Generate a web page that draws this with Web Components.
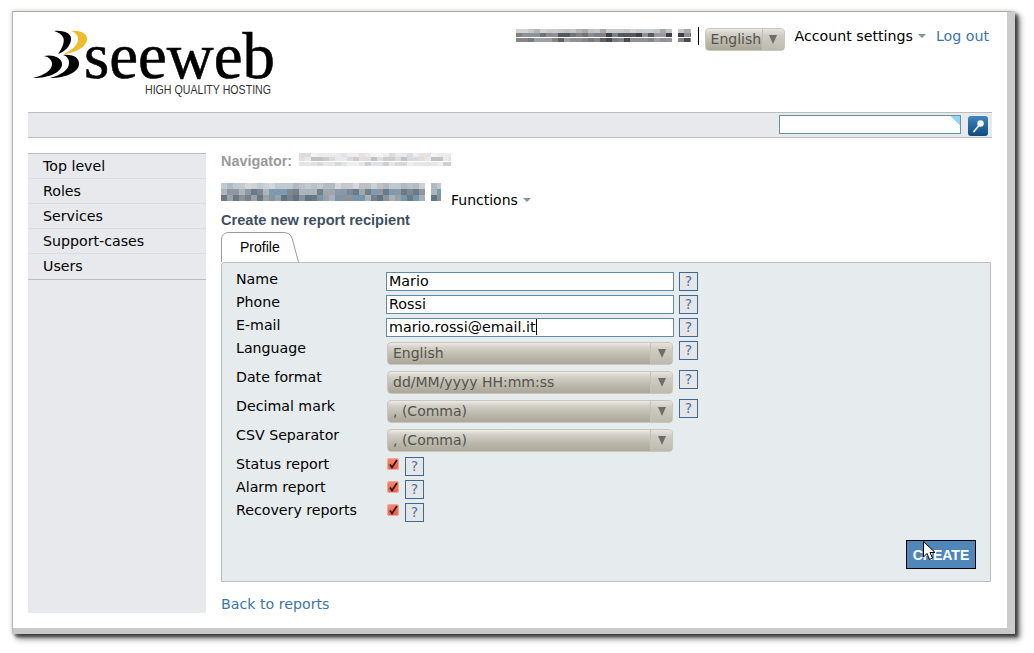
<!DOCTYPE html>
<html>
<head>
<meta charset="utf-8">
<title>Create new report recipient</title>
<style>
  html, body { margin: 0; height: 100%; overflow: hidden; background: #fff; }
  body { font: 14.2px/16px "DejaVu Sans", sans-serif; color: #000; }
</style>
</head>
<body>
<x-window>
  <x-header></x-header>
  <x-searchbar></x-searchbar>
  <x-columns>
    <x-sidebar slot="side">
      <x-navitem>Top level</x-navitem>
      <x-navitem>Roles</x-navitem>
      <x-navitem>Services</x-navitem>
      <x-navitem>Support-cases</x-navitem>
      <x-navitem>Users</x-navitem>
    </x-sidebar>
    <x-report-form></x-report-form>
  </x-columns>
</x-window>

<script>
const SANS = '"DejaVu Sans", sans-serif';
const ARIAL = '"Liberation Sans", Arial, sans-serif';

function safeDefine(name, clazz) {
  if (!customElements.get(name)) customElements.define(name, clazz);
}

// base class, subclasses only give their markup
class Shadowed extends HTMLElement {
  connectedCallback() {
    if (!this.shadowRoot) {
      this.attachShadow({ mode: 'open' });
      this.shadowRoot.innerHTML = this.markup();
    }
  }
}

// -- x-window: the desktop window frame with its drop shadow --
class XWindow extends Shadowed {
  markup() {
    return `
      <style>
        :host {
          display: block; box-sizing: border-box;
          width: 1003px; height: 623px; margin: 11px 0 0 12px;
          padding: 0 15px;
          background: #fff;
          border-style: solid; border-color: #a9a9a4 #cccccc #c8c8c8 #b8b8b8;
          border-width: 1px 8px 6px 1px;
          box-shadow: 0 0 5px rgba(0,0,0,.18), 3px 3px 3px rgba(0,0,0,.55), 5px 5px 6px rgba(0,0,0,.45);
        }
      </style>
      <slot></slot>`;
  }
}
safeDefine('x-window', XWindow);

// -- x-mosaic: pixelated (censored) text block, one gradient per row --
class XMosaic extends Shadowed {
  markup() {
    const w = +this.getAttribute('w');
    const rows = this.getAttribute('rows').split(' ').map(Number); // fade to white per row
    const cell = +this.getAttribute('cell') || 5;
    const rowH = +this.getAttribute('rowh') || 5;
    const pal = this.getAttribute('colors').split(' ');
    const gaps = (this.getAttribute('gaps') || '').split(' ').filter(Boolean).map(Number);
    let seed = +this.getAttribute('seed') || 7;
    const n = Math.ceil(w / cell);
    const layers = rows.map((fade, r) => {
      const stops = [];
      for (let i = 0; i < n; i++) {
        seed = (seed * 9301 + 49297) % 233280;
        const hex = pal[(seed >> 3) % pal.length];
        const rgb = [1, 3, 5].map(k => parseInt(hex.substr(k, 2), 16));
        const mix = rgb.map(v => Math.round(v + (255 - v) * fade));
        const c = gaps.includes(i) ? 'transparent' : `rgb(${mix.join(',')})`;
        stops.push(`${c} ${i * cell}px ${(i + 1) * cell}px`);
      }
      return `linear-gradient(90deg, ${stops.join(',')}) 0 ${r * rowH}px / 100% ${rowH}px no-repeat`;
    });
    return `
      <style>
        :host { display: inline-block; flex: none; width: ${w}px; height: ${rows.length * rowH}px; background: ${layers.join(',')}; }
      </style>`;
  }
}
safeDefine('x-mosaic', XMosaic);

// -- x-caret: small grey menu triangle --
class XCaret extends Shadowed {
  markup() {
    return `
      <style>:host { display: inline-block; width: 0; height: 0; margin: 0 0 2px 5px; vertical-align: middle;
        border: 4px solid transparent; border-top: 4px solid #8a929a; border-bottom: 0; }</style>`;
  }
}
safeDefine('x-caret', XCaret);

// -- x-select: the gtk style drop down --
class XSelect extends Shadowed {
  markup() {
    return `
      <style>
        :host { display: flex; box-sizing: border-box; height: 23px; color: #55534d; font-size: 14px;
          border: 1px solid #c9c7bc; border-radius: 4px;
          background: linear-gradient(#ecebe6, #d6d4cb 18%, #bfbcb0 55%, #aba799); }
        .text { flex: 1; min-width: 0; padding-left: 5px; line-height: 20px; white-space: nowrap; }
        .btn { width: 21px; border-left: 1px solid #c4c2b7; display: flex; align-items: center; justify-content: center;
          background: linear-gradient(#e6e4de, #cfcdc3 30%, #bdbaae); border-radius: 0 3px 3px 0; }
        .btn i { width: 0; height: 0; border: 4px solid transparent; border-top: 9px solid #6f6d68; border-bottom: 0; }
      </style>
      <span class="text"><slot></slot></span><span class="btn"><i></i></span>`;
  }
}
safeDefine('x-select', XSelect);

// -- x-header: logo + user tools --
class XHeader extends Shadowed {
  markup() {
    return `
      <style>
        :host { display: flex; justify-content: space-between; height: 100px; }
        svg { display: block; }
        .tools { display: flex; align-items: flex-start; padding: 16px 3px 0 0; }
        x-mosaic { margin-top: 1px; }
        .sep { width: 1px; height: 18px; margin: -1px 6px 0 7px; background: #000; }
        x-select { width: 80px; margin-right: 10px; }
        .menu { line-height: 16px; white-space: nowrap; }
        a { color: #3a76a8; text-decoration: none; margin-left: 10px; line-height: 16px; }
      </style>
      <svg width="262" height="100" viewBox="0 -14 262 100">
        <path fill="#000" d="M26 5C37 4 44 8 43 14C42 21 36 26 30 28C35 21 37 15 35 11C33 8 30 6 26 5Z"/>
        <path fill="#ecbc2c" d="M43 5C53 4 60 8 59 14C58 21 48 27 35 28C45 24 50 19 50 13C50 9 47 6 43 5Z"/>
        <path fill="#000" d="M16 30C26 28 34 32 34 38C34 46 22 52 5 52C17 49 24 44 24 38C24 34 21 31 16 30Z"/>
        <path fill="#000" d="M35 29C46 28 51 32 51 38C51 46 38 52 22 52C33 49 41 44 41 37C41 33 39 30 35 29Z"/>
        <text x="56" y="52" font-family="Liberation Serif, serif" font-size="66" textLength="191" lengthAdjust="spacingAndGlyphs" fill="#000" stroke="#000" stroke-width=".6">seeweb</text>
        <text x="117" y="68" font-family="Liberation Sans, sans-serif" font-size="12" textLength="126" lengthAdjust="spacingAndGlyphs" fill="#333">HIGH QUALITY HOSTING</text>
      </svg>
      <div class="tools">
        <x-mosaic w="175" rows=".55 0 .05" rowh="4.4" cell="6" seed="31" gaps="26"
          colors="#3f3f46 #8a8a90 #6f7478 #9a9aa2 #7a8088 #55585c #85807e #8c9298"></x-mosaic>
        <span class="sep"></span>
        <x-select>English</x-select>
        <span class="menu">Account settings<x-caret></x-caret></span>
        <a>Log out</a>
      </div>`;
  }
}
safeDefine('x-header', XHeader);

// -- x-searchbar --
class XSearchbar extends Shadowed {
  markup() {
    return `
      <style>
        :host { display: flex; justify-content: flex-end; align-items: flex-start; box-sizing: border-box; height: 26px;
          padding: 2px 4px 0 0; background: #e8e9ec;
          border-top: 1px solid #bdbdbd; border-bottom: 1px solid #bdbdbd; }
        .box { box-sizing: border-box; width: 182px; height: 19px; background: #fff; border: 1px solid #6d909f;
          background: linear-gradient(225deg, #8fd6fb 0 7px, #fff 7px); }
        button { box-sizing: border-box; width: 20px; height: 20px; margin: 1px 0 0 7px; padding: 0; border: 0; border-radius: 3px;
          background: linear-gradient(#3f86c0, #104a7e); }
        svg { display: block; }
      </style>
      <div class="box"></div>
      <button aria-label="Search">
        <svg width="20" height="20" viewBox="0 0 20 20">
          <circle cx="12.5" cy="7.5" r="3.2" fill="#fff"/>
          <path d="M10.5 10 L6 15.5" stroke="#e8eef4" stroke-width="1.8" stroke-linecap="round"/>
        </svg>
      </button>`;
  }
}
safeDefine('x-searchbar', XSearchbar);

// -- x-columns: sidebar + main --
class XColumns extends Shadowed {
  markup() {
    return `
      <style>
        :host { display: flex; gap: 15px; padding-top: 15px; }
      </style>
      <slot name="side"></slot><slot></slot>`;
  }
}
safeDefine('x-columns', XColumns);

// -- x-sidebar --
class XSidebar extends Shadowed {
  markup() {
    return `
      <style>
        :host { display: block; flex: none; box-sizing: border-box; width: 178px; height: 460px; background: #e8e9ec; border-top: 1px solid #bdbdbd; }
        .list { border-bottom: 1px solid #bdbdbd; }
      </style>
      <div class="list"><slot></slot></div>`;
  }
}
safeDefine('x-sidebar', XSidebar);

class XNavitem extends Shadowed {
  markup() {
    return `
      <style>
        :host { display: block; box-sizing: border-box; height: 25px; padding: 4px 0 0 15px; line-height: 16px; border-bottom: 1px solid #dcdde0; }
        :host(:last-child) { border-bottom: 0; }
      </style>
      <slot></slot>`;
  }
}
safeDefine('x-navitem', XNavitem);

// -- x-tab: the outlined tab with slanted right side --
class XTab extends Shadowed {
  markup() {
    return `
      <style>
        :host { display: block; position: relative; width: 78px; height: 30px; font: 14px/16px ${ARIAL}; }
        svg { position: absolute; left: 0; top: 0; }
        span { position: absolute; left: 19px; top: 7px; }
      </style>
      <svg width="78" height="31" viewBox="0 0 78 31">
        <path d="M.5 30V8Q.5 .5 8 .5H62Q69 .5 71 6L77.5 30" fill="#fff" stroke="#9a9a9a"/>
      </svg>
      <span><slot></slot></span>`;
  }
}
safeDefine('x-tab', XTab);

// -- x-row: one line of the form --
class XRow extends Shadowed {
  markup() {
    const h = this.getAttribute('h') || 23;
    return `
      <style>
        :host { display: flex; height: ${h}px; align-items: flex-start; }
        .label { flex: none; width: 150px; line-height: 14px; white-space: nowrap; }
        .ctl { display: flex; align-items: flex-start; }
      </style>
      <span class="label">${this.getAttribute('label')}</span>
      <div class="ctl"><slot></slot></div>`;
  }
}
safeDefine('x-row', XRow);

// -- x-field: text field --
class XField extends Shadowed {
  markup() {
    const caret = this.hasAttribute('focus') ? '<i></i>' : '';
    return `
      <style>
        :host { display: block; box-sizing: border-box; width: 288px; height: 19px; margin-right: 5px; padding-left: 2px;
          background: #fff; border: 1px solid #5f8ba8; font-size: 14.3px; line-height: 16px; white-space: nowrap; }
        i { display: inline-block; width: 1px; height: 16px; background: #000; vertical-align: top; margin-left: 0; }
      </style>
      <slot></slot>${caret}`;
  }
}
safeDefine('x-field', XField);

// -- x-help: the ? button --
class XHelp extends Shadowed {
  markup() {
    return `
      <style>
        :host { display: block; box-sizing: border-box; width: 19px; height: 19px; border: 1px solid #3d6a94; background: #e6e6e8;
          color: #4b74a6; font: 14px/17px ${SANS}; text-align: center; }
      </style>?`;
  }
}
safeDefine('x-help', XHelp);

// -- x-check: red gtk checkbox --
class XCheck extends Shadowed {
  markup() {
    return `
      <style>
        :host { display: block; width: 12px; height: 12px; margin: 1px 6px 0 1px; border-radius: 3px;
          background: linear-gradient(#f58a74, #ea5a44); box-shadow: inset 0 0 0 1px #f4a898; }
        svg { display: block; }
      </style>
      <svg width="12" height="12" viewBox="0 0 12 12"><path d="M3 6.5L5 9.5L10 2" fill="none" stroke="#2a1a18" stroke-width="1.8"/></svg>`;
  }
}
safeDefine('x-check', XCheck);

// -- x-report-form: main column --
class XReportForm extends Shadowed {
  markup() {
    return `
      <style>
        :host { display: block; width: 770px; }
        .nav { display: flex; align-items: flex-start; height: 22px; padding-top: 1px; box-sizing: border-box;
          font: bold 14.4px/15px ${ARIAL}; color: #9a9a9a; }
        .nav x-mosaic { margin: -1px 0 0 7px; }
        .title { display: flex; align-items: flex-start; height: 36px; padding-top: 7px; box-sizing: border-box; }
        .title x-mosaic { margin-top: 1px; }
        .fn { margin: 10px 0 0 10px; line-height: 16px; font-size: 14px; }
        h2 { margin: 0; padding-top: 1px; box-sizing: border-box; font: bold 14.6px/16px ${ARIAL}; color: #3f4f5f; height: 21px; }
        .panel { box-sizing: border-box; height: 320px; padding: 9px 14px 0; background: #e6ebee; border: 1px solid #bdbdbd; border-top-left-radius: 3px; }
        x-select { width: 286px; margin: 1px 6px 0 1px; }
        .actions { display: flex; justify-content: flex-end; margin-top: 14px; }
        .create { position: relative; box-sizing: border-box; width: 70px; height: 29px; background: #5087bb; border: 1px solid #000;
          color: #fff; font: bold 14px/28px ${ARIAL}; text-align: center; }
        .cursor { position: absolute; left: 16px; top: 0; }
        a { display: block; margin-top: 14px; color: #3a76a8; line-height: 16px; text-decoration: none; }
      </style>
      <div class="nav">Navigator:
        <x-mosaic w="152" rows=".6 .3 .45" rowh="4.4" cell="6" seed="11" colors="#cfcfd2 #e0e0e2 #b8b8bc #a8a8ae #d8cfc8 #c4ccd4"></x-mosaic>
      </div>
      <div class="title">
        <x-mosaic w="220" rows=".5 .05 0" rowh="6" cell="6" seed="23" gaps="34" colors="#77828c #98a2aa #5f7484 #a8b0b8 #7696ac #6d7880 #8a929a"></x-mosaic>
        <span class="fn">Functions<x-caret></x-caret></span>
      </div>
      <h2>Create new report recipient</h2>
      <x-tab>Profile</x-tab>
      <div class="panel">
        <x-row label="Name"><x-field>Mario</x-field><x-help></x-help></x-row>
        <x-row label="Phone"><x-field>Rossi</x-field><x-help></x-help></x-row>
        <x-row label="E-mail"><x-field focus>mario.rossi@email.it</x-field><x-help></x-help></x-row>
        <x-row label="Language" h="29"><x-select>English</x-select><x-help></x-help></x-row>
        <x-row label="Date format" h="29"><x-select>dd/MM/yyyy HH:mm:ss</x-select><x-help></x-help></x-row>
        <x-row label="Decimal mark" h="29"><x-select>, (Comma)</x-select><x-help></x-help></x-row>
        <x-row label="CSV Separator" h="29"><x-select>, (Comma)</x-select></x-row>
        <x-row label="Status report"><x-check></x-check><x-help></x-help></x-row>
        <x-row label="Alarm report"><x-check></x-check><x-help></x-help></x-row>
        <x-row label="Recovery reports"><x-check></x-check><x-help></x-help></x-row>
        <div class="actions">
          <div class="create">CREATE
            <svg class="cursor" width="14" height="20" viewBox="0 0 14 20">
              <path d="M.5 .5V16L4 12.5L6.5 18.5L9.5 17L7 11.5H12Z" fill="#fff" stroke="#000"/>
            </svg>
          </div>
        </div>
      </div>
      <a>Back to reports</a>`;
  }
}
safeDefine('x-report-form', XReportForm);
</script>
</body>
</html>
